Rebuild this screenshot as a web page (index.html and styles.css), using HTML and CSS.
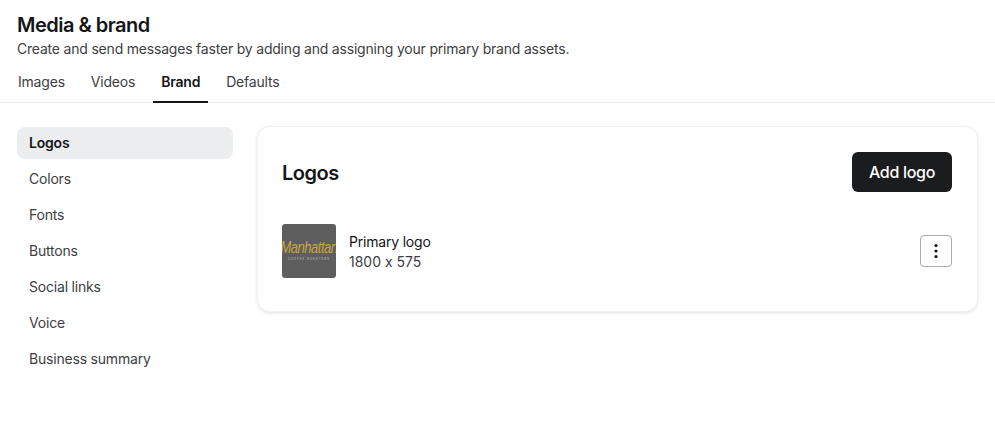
FILE: index.html
```html
<!DOCTYPE html>
<html lang="en">
<head>
    <meta charset="UTF-8">
    <title>Media &amp; brand</title>
    <link rel="stylesheet" href="styles.css">
</head>
<body>
    <header class="page-header">
        <h1 class="page-header__title">Media &amp; brand</h1>
        <p class="page-header__text">Create and send messages faster by adding and assigning your primary brand assets.</p>
        <nav class="tabs">
            <a class="tabs__item" href="#">Images</a>
            <a class="tabs__item" href="#">Videos</a>
            <a class="tabs__item tabs__item--active" href="#">Brand</a>
            <a class="tabs__item" href="#">Defaults</a>
        </nav>
    </header>
    <div class="content">
        <ul class="side-nav">
            <li class="side-nav__item side-nav__item--active">Logos</li>
            <li class="side-nav__item">Colors</li>
            <li class="side-nav__item">Fonts</li>
            <li class="side-nav__item">Buttons</li>
            <li class="side-nav__item">Social links</li>
            <li class="side-nav__item">Voice</li>
            <li class="side-nav__item">Business summary</li>
        </ul>
        <main class="card">
            <div class="card__header">
                <h2 class="card__title">Logos</h2>
                <button class="btn-primary">Add logo</button>
            </div>
            <div class="logo-row">
                <div class="logo-thumb">
                    <span class="logo-thumb__name">Manhattan</span>
                    <span class="logo-thumb__sub">COFFEE ROASTERS</span>
                </div>
                <div class="logo-row__info">
                    <div class="logo-row__name">Primary logo</div>
                    <div class="logo-row__size">1800 x 575</div>
                </div>
                <button class="btn-more" aria-label="More actions">
                    <svg class="btn-more__icon" viewBox="0 0 4 16">
                        <circle cx="2" cy="2.5" r="1.6" />
                        <circle cx="2" cy="8" r="1.6" />
                        <circle cx="2" cy="13.5" r="1.6" />
                    </svg>
                </button>
            </div>
        </main>
    </div>
</body>
</html>
```

FILE: styles.css
```css
body {
    margin: 0;
    background: #FFFFFF;
    color: #141517;
    font-family: Inter, "Liberation Sans", sans-serif;
    font-feature-settings: "calt" 0;
    letter-spacing: -0.2px;
}

.page-header {
    padding: 13px 0 0 17px;
    border-bottom: 1px solid #E8E9EA;
}

.page-header__title {
    margin: 0;
    font-size: 20px;
    line-height: 24px;
    font-weight: 600;
    letter-spacing: -0.5px;
}

.page-header__text {
    margin: 2px 0 0;
    font-size: 14px;
    line-height: 20px;
    color: #3D4043;
}

.tabs {
    display: flex;
    gap: 10px;
    margin: 5px 0 0 -7px;
}

.tabs__item {
    height: 38px;
    padding: 8px 8px 0;
    box-sizing: border-box;
    font-size: 14px;
    line-height: 20px;
    color: #3D4043;
    text-decoration: none;
}

.tabs__item--active {
    height: 39px;
    margin-bottom: -1px;
    font-weight: 600;
    color: #141517;
    border-bottom: 2px solid #141517;
}

.content {
    display: flex;
    align-items: flex-start;
    gap: 25px;
    padding: 24px 18px 0 17px;
}

.side-nav {
    flex: 0 0 216px;
    margin: 0;
    padding: 0;
    list-style: none;
    display: grid;
    grid-auto-rows: 32px;
    row-gap: 4px;
}

.side-nav__item {
    padding: 0 12px;
    border-radius: 8px;
    font-size: 14px;
    line-height: 32px;
    color: #3D4043;
}

.side-nav__item--active {
    background: #ECEDEF;
    font-weight: 600;
    color: #141517;
}

.card {
    flex: 1 0 0;
    box-sizing: border-box;
    height: 184px;
    padding: 25px 25px 0 24px;
    border-radius: 12px;
    background: #FFFFFF;
    box-shadow: 0 0 0 1px #F1F1F2, 0 1px 4px rgba(0, 0, 0, 0.18);
}

.card__header {
    display: flex;
    align-items: center;
    justify-content: space-between;
}

.card__title {
    margin: 1px 0 0;
    font-size: 20px;
    line-height: 24px;
    font-weight: 600;
    letter-spacing: -0.5px;
}

.btn-primary {
    width: 100px;
    height: 40px;
    border: 0;
    border-radius: 6px;
    background: #1B1C1E;
    color: #FFFFFF;
    font-family: inherit;
    font-size: 16px;
    font-weight: 500;
    letter-spacing: -0.3px;
}

.logo-row {
    display: flex;
    align-items: center;
    margin-top: 32px;
}

.logo-thumb {
    flex: 0 0 54px;
    height: 54px;
    box-sizing: border-box;
    border-radius: 3px;
    background: #5E5E5F;
    display: flex;
    flex-direction: column;
    align-items: center;
    justify-content: center;
    overflow: hidden;
}

.logo-thumb__name {
    font-family: "Liberation Sans", sans-serif;
    font-style: italic;
    font-size: 13px;
    line-height: 14px;
    letter-spacing: -0.5px;
    color: #C8A43F;
    white-space: nowrap;
    transform: scaleY(1.25);
}

.logo-thumb__sub {
    margin-top: 2px;
    font-size: 3px;
    line-height: 4px;
    letter-spacing: 0.9px;
    color: #C4C4C4;
    white-space: nowrap;
}

.logo-row__info {
    flex: 1 0 0;
    margin-left: 13px;
    padding-top: 2px;
    font-size: 14px;
    line-height: 20px;
}

.logo-row__size {
    color: #3D4043;
    letter-spacing: 0;
}

.btn-more {
    flex: 0 0 32px;
    height: 32px;
    padding: 0;
    border: 1px solid #A9ABAD;
    border-radius: 4px;
    background: #FFFFFF;
    display: flex;
    align-items: center;
    justify-content: center;
}

.btn-more__icon {
    width: 4px;
    height: 16px;
    fill: #141517;
}
```
